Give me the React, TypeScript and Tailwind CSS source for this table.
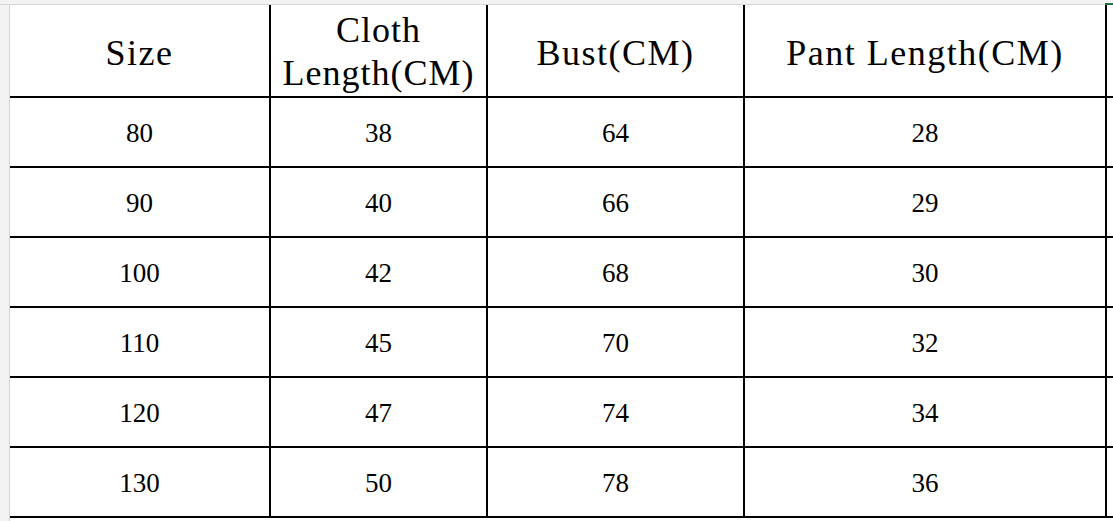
import React from "react";

const headers: React.ReactNode[] = [
  "Size",
  <>
    <div>Cloth</div>
    <div>Length(CM)</div>
  </>,
  "Bust(CM)",
  "Pant Length(CM)",
  "",
];

const rows = [
  ["80", "38", "64", "28"],
  ["90", "40", "66", "29"],
  ["100", "42", "68", "30"],
  ["110", "45", "70", "32"],
  ["120", "47", "74", "34"],
  ["130", "50", "78", "36"],
];

export default function App() {
  return (
    <div className="w-[1113px] h-[521px] overflow-hidden bg-[#f3f3f3] flex flex-col">
      <div className="h-[5px] flex shrink-0 border-b border-[#d6d6d6]">
        <div className="flex-1" />
        <div className="w-[8px] h-[2px] mt-[3px] bg-[#217346]" />
      </div>
      <div className="flex flex-1">
        <div className="w-[10px] shrink-0 border-r border-[#d6d6d6]" />
        <div className="flex-1 bg-white">
          <div className="grid grid-cols-[261px_217px_257px_362px_1fr]">
            {headers.map((h, i) => (
              <div
                key={i}
                className={`h-[93px] border-b-2 border-black flex flex-col items-center justify-center text-black text-[36px] tracking-[1.5px] ${
                  i === 1 ? "leading-[43px] pt-[2px] tracking-[1px]" : "leading-[45px] pt-[6px]"
                } ${i < 4 ? "border-r-2" : ""}`}
                style={{ fontFamily: '"Liberation Serif", serif' }}
              >
                {h}
              </div>
            ))}
            {rows.map((r, ri) => (
              <React.Fragment key={ri}>
                {r.map((c, ci) => (
                  <div
                    key={ci}
                    className="h-[70px] border-b-2 border-r-2 border-black flex items-center justify-center text-black text-[27px] pt-[3px]"
                    style={{ fontFamily: '"Liberation Serif", serif' }}
                  >
                    {c}
                  </div>
                ))}
                <div className="h-[70px] border-b-2 border-black" />
              </React.Fragment>
            ))}
          </div>
        </div>
      </div>
    </div>
  );
}
